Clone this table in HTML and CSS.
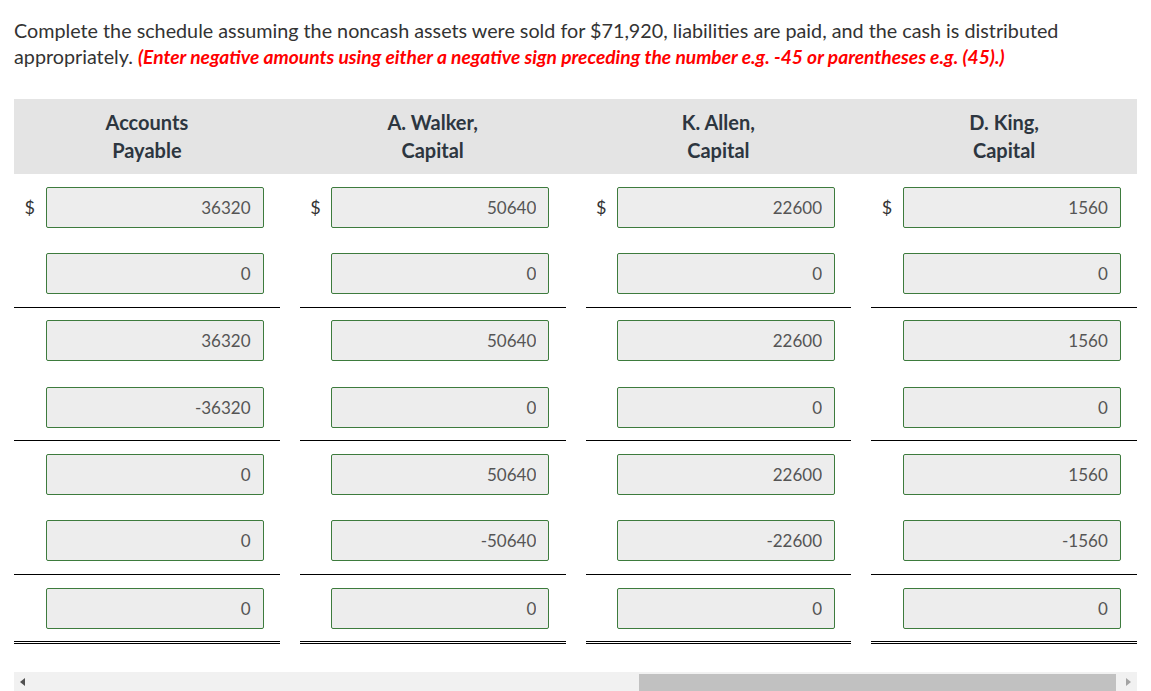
FILE: index.html
```html
<!DOCTYPE html>
<html lang="en">
<head>
<meta charset="utf-8">
<title>Schedule</title>
<link rel="stylesheet" href="styles.css">
</head>
<body>
<div class="page">
  <p class="prompt">Complete the schedule assuming the noncash assets were sold for $71,920, liabilities are paid, and the cash is distributed appropriately. <em class="hint">(Enter negative amounts using either a negative sign preceding the number e.g. -45 or parentheses e.g. (45).)</em></p>

  <div class="scroller">
    <table class="sched">
      <colgroup>
        <col class="c-cur"><col class="c-inp"><col class="c-gap">
        <col class="c-cur"><col class="c-inp"><col class="c-gap">
        <col class="c-cur"><col class="c-inp"><col class="c-gap">
        <col class="c-cur"><col class="c-inp">
      </colgroup>
      <thead>
        <tr>
          <th colspan="2">Accounts<br>Payable</th><th></th>
          <th colspan="2">A. Walker,<br>Capital</th><th></th>
          <th colspan="2">K. Allen,<br>Capital</th><th></th>
          <th colspan="2">D. King,<br>Capital</th>
        </tr>
      </thead>
      <tbody>
        <tr>
          <td class="cur">$</td><td class="inp"><input class="box" type="text" value="36320" readonly></td><td></td>
          <td class="cur">$</td><td class="inp"><input class="box" type="text" value="50640" readonly></td><td></td>
          <td class="cur">$</td><td class="inp"><input class="box" type="text" value="22600" readonly></td><td></td>
          <td class="cur">$</td><td class="inp"><input class="box" type="text" value="1560" readonly></td>
        </tr>
        <tr class="ruled">
          <td class="cur"></td><td class="inp"><input class="box" type="text" value="0" readonly></td><td></td>
          <td class="cur"></td><td class="inp"><input class="box" type="text" value="0" readonly></td><td></td>
          <td class="cur"></td><td class="inp"><input class="box" type="text" value="0" readonly></td><td></td>
          <td class="cur"></td><td class="inp"><input class="box" type="text" value="0" readonly></td>
        </tr>
        <tr>
          <td class="cur"></td><td class="inp"><input class="box" type="text" value="36320" readonly></td><td></td>
          <td class="cur"></td><td class="inp"><input class="box" type="text" value="50640" readonly></td><td></td>
          <td class="cur"></td><td class="inp"><input class="box" type="text" value="22600" readonly></td><td></td>
          <td class="cur"></td><td class="inp"><input class="box" type="text" value="1560" readonly></td>
        </tr>
        <tr class="ruled">
          <td class="cur"></td><td class="inp"><input class="box" type="text" value="-36320" readonly></td><td></td>
          <td class="cur"></td><td class="inp"><input class="box" type="text" value="0" readonly></td><td></td>
          <td class="cur"></td><td class="inp"><input class="box" type="text" value="0" readonly></td><td></td>
          <td class="cur"></td><td class="inp"><input class="box" type="text" value="0" readonly></td>
        </tr>
        <tr>
          <td class="cur"></td><td class="inp"><input class="box" type="text" value="0" readonly></td><td></td>
          <td class="cur"></td><td class="inp"><input class="box" type="text" value="50640" readonly></td><td></td>
          <td class="cur"></td><td class="inp"><input class="box" type="text" value="22600" readonly></td><td></td>
          <td class="cur"></td><td class="inp"><input class="box" type="text" value="1560" readonly></td>
        </tr>
        <tr class="ruled">
          <td class="cur"></td><td class="inp"><input class="box" type="text" value="0" readonly></td><td></td>
          <td class="cur"></td><td class="inp"><input class="box" type="text" value="-50640" readonly></td><td></td>
          <td class="cur"></td><td class="inp"><input class="box" type="text" value="-22600" readonly></td><td></td>
          <td class="cur"></td><td class="inp"><input class="box" type="text" value="-1560" readonly></td>
        </tr>
        <tr class="total">
          <td class="cur"></td><td class="inp"><input class="box" type="text" value="0" readonly></td><td></td>
          <td class="cur"></td><td class="inp"><input class="box" type="text" value="0" readonly></td><td></td>
          <td class="cur"></td><td class="inp"><input class="box" type="text" value="0" readonly></td><td></td>
          <td class="cur"></td><td class="inp"><input class="box" type="text" value="0" readonly></td>
        </tr>
      </tbody>
    </table>
  </div>

  <div class="hscroll">
    <div class="sb-btn"><span class="arrow-left"></span></div>
    <div class="sb-space"></div>
    <div class="sb-thumb"></div>
    <div class="sb-end"></div>
    <div class="sb-btn"><span class="arrow-right"></span></div>
  </div>
</div>
</body>
</html>
```

FILE: styles.css
```css
html, body {
  margin: 0;
  padding: 0;
  height: 691px;
  overflow: hidden;
  background: #fff;
}

.page {
  padding: 18px 14px 0 14px;
  font-family: Lato, "Open Sans", sans-serif;
  color: #333;
}

.prompt {
  margin: 0;
  font-size: 19.75px;
  line-height: 26px;
  color: #333;
}

.hint {
  color: #f00;
  font-size: 19.2px;
  font-weight: bold;
  font-style: italic;
}

.scroller {
  margin-top: 29px;
}

.sched {
  width: 1123px;
  table-layout: fixed;
  border-collapse: collapse;
  border-spacing: 0;
}

.c-cur { width: 31.5px; }
.c-inp { width: 234.25px; }
.c-gap { width: 20px; }

.sched thead th {
  background: #e4e4e4;
  font-size: 20px;
  font-weight: bold;
  line-height: 28px;
  color: #2d3640;
  text-align: center;
  padding: 8.5px 0 10.5px;
}

.sched td {
  padding: 12.67px 0;
  vertical-align: middle;
}

.sched td.inp {
  padding-right: 16px;
}

.sched td.cur {
  text-align: center;
  font-size: 18px;
  color: #333;
}

.sched tr.ruled td.cur,
.sched tr.ruled td.inp {
  border-bottom: 1px solid #000;
}

.sched tr.total td.cur,
.sched tr.total td.inp {
  border-bottom: 3px double #000;
}

.box {
  display: block;
  box-sizing: border-box;
  width: 218px;
  height: 41px;
  margin: 0;
  padding: 0 12px 0 4px;
  border: 1px solid #3d7b3d;
  border-radius: 2px;
  background: #ededed;
  font-family: Lato, "Open Sans", sans-serif;
  font-size: 17px;
  color: #555;
  text-align: right;
  outline: none;
}

.hscroll {
  margin-top: 28px;
  display: flex;
  height: 19px;
  background: #f1f1f1;
}

.sb-btn {
  width: 17px;
  flex: none;
  display: flex;
  align-items: center;
  justify-content: center;
}

.sb-space {
  flex: 1;
}

.sb-thumb {
  width: 477px;
  flex: none;
  margin-top: 2px;
  background: #c1c1c1;
}

.sb-end {
  width: 4px;
  flex: none;
}

.arrow-left {
  width: 0;
  height: 0;
  border-top: 4px solid transparent;
  border-bottom: 4px solid transparent;
  border-right: 5px solid #505050;
  margin-top: 1px;
}

.arrow-right {
  width: 0;
  height: 0;
  border-top: 4px solid transparent;
  border-bottom: 4px solid transparent;
  border-left: 5px solid #a3a3a3;
  margin-top: 1px;
}
```
